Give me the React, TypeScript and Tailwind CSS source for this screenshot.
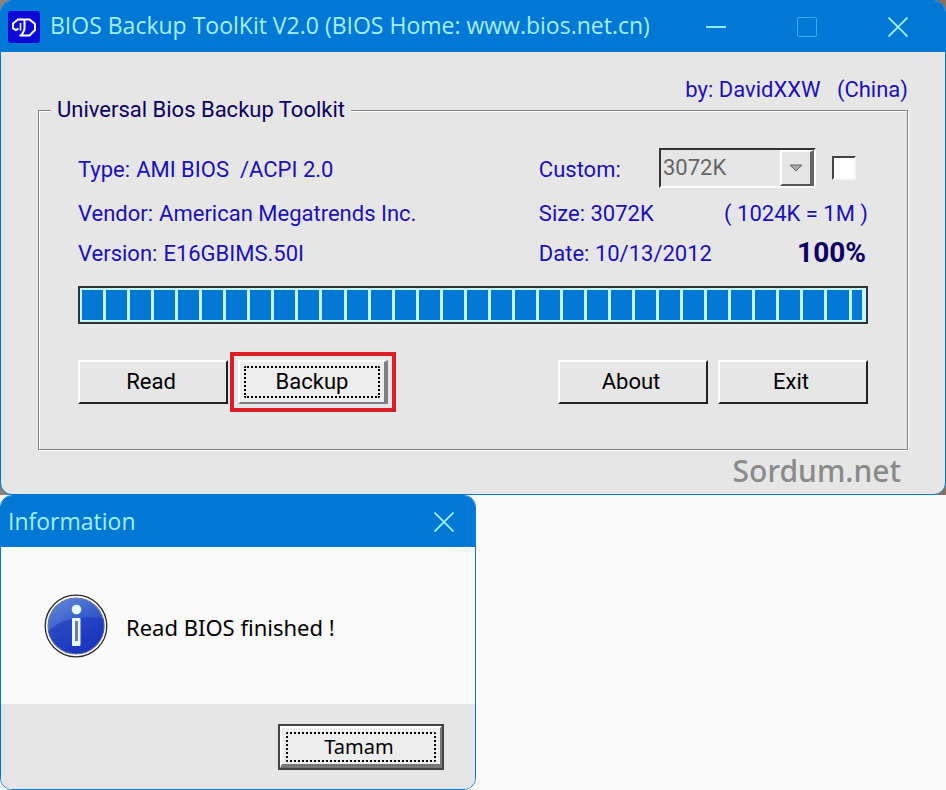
import type { ReactNode } from 'react'
import clsx from 'clsx'

const biosInfo = [
  { label: 'Type', value: 'AMI BIOS  /ACPI 2.0' },
  { label: 'Vendor', value: 'American Megatrends Inc.' },
  { label: 'Version', value: 'E16GBIMS.50I' },
]

const PROGRESS_BLOCKS = 32

function AppIcon() {
  return (
    <svg viewBox="0 0 32 32" className="size-8 shrink-0" aria-hidden="true">
      <rect width="32" height="32" rx="3" fill="#0d08d8" />
      <g fill="none" stroke="#fff" strokeWidth="2">
        <path d="M9 8.500H21.500L27 13V19L21.500 24.500H11.500" />
        <path d="M10 8.500L5 12.500V17.500L8 19L10.500 17.500" />
        <path d="M12.500 12V19.500" strokeWidth="1.600" />
        <path d="M16.500 8.500V18.500L13.500 24.500" strokeWidth="2" />
      </g>
    </svg>
  )
}

function CloseIcon() {
  return (
    <svg viewBox="0 0 20 20" className="size-5" fill="none" stroke="#a5f0ff" strokeWidth="1.800" aria-hidden="true">
      <path d="M0.500 0.500L19.500 19.500M19.500 0.500L0.500 19.500" />
    </svg>
  )
}

function InfoIcon() {
  return (
    <svg viewBox="0 0 64 64" className="size-16 shrink-0" aria-hidden="true">
      <defs>
        <linearGradient id="ball" x1="0" y1="0" x2="0.600" y2="1">
          <stop offset="0" stopColor="#6a90da" />
          <stop offset="0.500" stopColor="#3a60cc" />
          <stop offset="1" stopColor="#2440c6" />
        </linearGradient>
      </defs>
      <circle cx="32" cy="32" r="30.800" fill="#fff" stroke="#2a2a2a" strokeWidth="1.300" />
      <circle cx="32" cy="32" r="28" fill="url(#ball)" stroke="#6a78a4" strokeWidth="1.200" />
      <path d="M4.500 37C14 26 34 21 59.500 24A28 28 0 0 1 32 59.500A28 28 0 0 1 4.500 37Z" fill="#0a22b4" opacity="0.400" />
      <circle cx="32.500" cy="15.500" r="4.800" fill="#e8fbff" />
      <rect x="28" y="24" width="8.500" height="28" rx="1" fill="#e8fbff" />
      <rect x="31" y="27" width="3" height="20" fill="#6f7fa8" />
    </svg>
  )
}

type ClassicButtonProps = {
  children: ReactNode
  focused?: boolean
  className?: string
}

function ClassicButton({ children, focused, className }: ClassicButtonProps) {
  return (
    <button
      type="button"
      className={clsx(
        'relative h-11 w-[150px] border-2 border-t-white border-l-white text-center text-black',
        focused
          ? 'border-r-4 border-r-[#7b8086] border-b-[#7b8086] bg-[#ededed]'
          : 'border-r-[#222] border-b-[#222] bg-[#e6e6e6] pr-1',
        className,
      )}
    >
      {focused && <span className="absolute inset-x-1 inset-y-1 rounded-xs border-2 border-dotted border-black" />}
      {children}
    </button>
  )
}

function MainWindow() {
  return (
    <main className="overflow-hidden rounded-xl border border-[#0078d4] bg-[#e6e6e6]">
      <header className="flex h-[51px] items-center bg-[#0078d4] pr-[37px] pl-[7px]">
        <AppIcon />
        <h1 className="ml-2.5 flex-1 pb-0.5 font-['Open_Sans','Noto_Sans',sans-serif] text-[23px] whitespace-nowrap text-[#a5f0ff]">
          BIOS Backup ToolKit V2.0 (BIOS Home: www.bios.net.cn)
        </h1>
        <div className="flex items-center gap-[71px]">
          <button type="button" aria-label="Minimize" className="flex h-5 items-center">
            <span className="h-0.5 w-5 bg-[#8eeaff]" />
          </button>
          <button type="button" aria-label="Maximize" className="size-5 rounded-xs border border-[#3fa9f5]" />
          <button type="button" aria-label="Close">
            <CloseIcon />
          </button>
        </div>
      </header>

      <div className="px-[37px] pt-6 font-[Roboto,'Liberation_Sans',sans-serif] text-[22px] leading-7 text-[#1c10b4]">
        <p className="text-right whitespace-pre">by: DavidXXW   (China)</p>

        <fieldset className="-mt-2 h-[354px] border border-[#808080] pr-[39px] pl-[39px] shadow-[1px_1px_0_#fff,inset_1px_1px_0_#fff]">
          <legend className="-ml-[27px] bg-[#e6e6e6] px-[6px] text-[#0c0060]">Universal Bios Backup Toolkit</legend>

          <div className="grid grid-cols-[7fr_5fr] pt-[22px]">
            <dl className="flex flex-col">
              {biosInfo.map((item) => (
                <div key={item.label} className="flex h-10 items-center gap-1.5 whitespace-pre first:h-12">
                  <dt>{item.label}:</dt>
                  <dd>{item.value}</dd>
                </div>
              ))}
            </dl>

            <div className="flex flex-col">
              <div className="flex h-12 items-center">
                <label htmlFor="custom-size" className="flex-1">
                  Custom:
                </label>
                <div className="relative -mt-1">
                  <select
                    id="custom-size"
                    disabled
                    className="h-10 w-[157px] appearance-none border-2 border-t-[#333] border-r-white border-b-white border-l-[#333] bg-[#e6e6e6] pl-0.5 text-[#666] opacity-100"
                  >
                    <option>3072K</option>
                  </select>
                  <span className="pointer-events-none absolute top-0.5 right-0.5 bottom-0.5 flex w-[34px] items-center justify-center border-2 border-t-white border-r-4 border-r-[#666] border-b-[#555] border-l-white bg-[#e6e6e6]">
                    <svg viewBox="0 0 14 8" className="h-2 w-3.5" aria-hidden="true">
                      <path d="M1 1H13L7 7Z" fill="#aaa" stroke="#666" />
                    </svg>
                  </span>
                </div>
                <input
                  type="checkbox"
                  aria-label="Use custom size"
                  className="-mt-1 mr-3 ml-4 size-6 appearance-none border-2 border-t-[#444] border-r-[#f6f6f6] border-b-[#f6f6f6] border-l-[#444] bg-white"
                />
              </div>
              <div className="flex h-10 items-center justify-between">
                <span>Size: 3072K</span>
                <span>( 1024K = 1M )</span>
              </div>
              <div className="flex h-10 items-center justify-between">
                <span>Date: 10/13/2012</span>
                <strong className="pr-0.5 pb-0.5 text-[28px] text-[#0c0060]">100%</strong>
              </div>
            </div>
          </div>

          <div
            role="progressbar"
            aria-label="Backup progress"
            aria-valuenow={100}
            className="mt-3 flex h-[38px] gap-[3px] border-2 border-[#333] bg-[#c4f6ff] py-0.5 pr-1 pl-0.5"
          >
            {Array.from({ length: PROGRESS_BLOCKS }, (_, i) => (
              <span key={i} className="flex-[2] bg-[#0078d4]" />
            ))}
            <span className="flex-1 bg-[#0078d4]" />
          </div>

          <div className="mt-9 flex justify-between">
            <div className="flex gap-2.5">
              <ClassicButton>Read</ClassicButton>
              <ClassicButton focused className="outline-4 outline-offset-4 outline-[#dc1f26]">
                Backup
              </ClassicButton>
            </div>
            <div className="flex gap-2.5">
              <ClassicButton>About</ClassicButton>
              <ClassicButton>Exit</ClassicButton>
            </div>
          </div>
        </fieldset>
      </div>

      <p className="pr-11 pb-0.5 text-right font-['Noto_Sans',sans-serif] text-[30px] leading-[42px] font-medium text-[#8a8a8a]">
        Sordum.net
      </p>
    </main>
  )
}

function InformationDialog() {
  return (
    <section
      role="dialog"
      aria-labelledby="dialog-title"
      className="w-[476px] max-w-full overflow-hidden rounded-xl border border-[#0078d4] bg-[#fafafa] font-['Noto_Sans',sans-serif] text-[22px]"
    >
      <header className="flex h-[51px] items-center justify-between bg-[#0078d4] pr-[21px] pl-[7px]">
        <h2 id="dialog-title" className="font-['Open_Sans','Noto_Sans',sans-serif] text-[23px] text-[#a5f0ff]">
          Information
        </h2>
        <button type="button" aria-label="Close">
          <CloseIcon />
        </button>
      </header>
      <div className="flex h-[157px] items-center gap-[18px] pl-[43px] text-black">
        <InfoIcon />
        <p className="pt-1">Read BIOS finished !</p>
      </div>
      <footer className="flex justify-end bg-[#e6e6e6] pt-5 pr-[31px] pb-[19px]">
        <button type="button" className="relative h-[46px] w-[166px] border-2 border-[#444] bg-[#ededed] pr-1 text-xl text-black">
          <span className="absolute inset-0 border-2 border-t-white border-r-[#777] border-b-4 border-b-[#777] border-l-white" />
          <span className="absolute inset-1.5 rounded-xs border-2 border-dotted border-black" />
          Tamam
        </button>
      </footer>
    </section>
  )
}

export default function App() {
  return (
    <div className="min-h-screen bg-[#fafafa]">
      <div className="bg-linear-to-r from-[#8d8078] to-[#8d6f62]">
        <MainWindow />
      </div>
      <InformationDialog />
    </div>
  )
}
